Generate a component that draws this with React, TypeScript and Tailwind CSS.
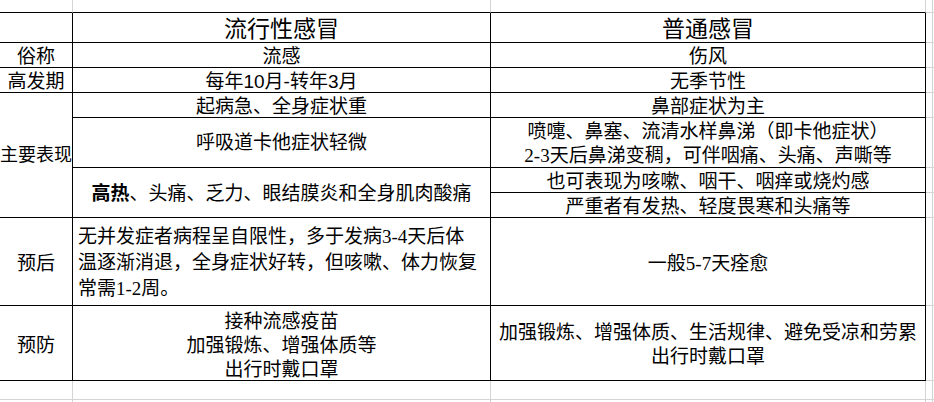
import React from "react";

const FONT = '"Liberation Serif", "Noto Sans CJK SC", serif';
const SANS = '"Liberation Sans", "Noto Sans CJK SC", sans-serif';

const B = "border-r border-b border-black";
const G = "border-r border-b border-[#d4d4d4]";
const C = "flex items-center justify-center text-center";

export default function App() {
  return (
    <div
      className="w-[934px] h-[402px] bg-white text-black overflow-hidden text-[19px] font-normal"
      style={{ fontFamily: FONT }}
    >
      <div className="grid w-[934px] h-[402px] grid-cols-[73px_418px_435px_7px_1fr] grid-rows-[13px_30px_25px_25px_25px_50px_25px_25px_88px_75px_19px_1fr]">
        {/* top strip */}
        <div className="col-start-1 row-start-1 border-r border-[#d4d4d4] border-b-black border-b" />
        <div className="col-start-2 row-start-1 border-r border-[#d4d4d4] border-b-black border-b" />
        <div className="col-start-3 row-start-1 border-r border-[#d4d4d4] border-b-black border-b" />
        <div className={`col-start-4 row-start-1 ${G}`} />
        <div className="col-start-5 row-start-1 border-b border-[#d4d4d4]" />

        {/* header */}
        <div className={`col-start-1 row-start-2 ${B}`} />
        <div className={`col-start-2 row-start-2 ${B} ${C} text-[23px] leading-[30px] pt-[4px]`}>
          流行性感冒
        </div>
        <div className={`col-start-3 row-start-2 ${B} ${C} text-[23px] leading-[30px] pt-[4px]`}>
          普通感冒
        </div>

        {/* 俗称 */}
        <div className={`col-start-1 row-start-3 ${B} ${C} leading-[25px] pt-[2px]`}>俗称</div>
        <div className={`col-start-2 row-start-3 ${B} ${C} leading-[25px] pt-[2px]`}>流感</div>
        <div className={`col-start-3 row-start-3 ${B} ${C} leading-[25px] pt-[2px]`}>伤风</div>

        {/* 高发期 */}
        <div className={`col-start-1 row-start-4 ${B} ${C} leading-[25px] pt-[2px]`}>高发期</div>
        <div
          className={`col-start-2 row-start-4 ${B} ${C} leading-[25px] pt-[2px]`}
          style={{ fontFamily: SANS }}
        >
          每年10月-转年3月
        </div>
        <div className={`col-start-3 row-start-4 ${B} ${C} leading-[25px] pt-[2px]`}>无季节性</div>

        {/* 主要表现 */}
        <div className={`col-start-1 row-start-5 row-span-4 ${B} ${C} text-[18px] leading-[25px] whitespace-nowrap`}>
          主要表现
        </div>
        <div className={`col-start-2 row-start-5 ${B} ${C} leading-[25px] pt-[2px]`}>
          起病急、全身症状重
        </div>
        <div className={`col-start-3 row-start-5 ${B} ${C} leading-[25px] pt-[2px]`}>
          鼻部症状为主
        </div>
        <div className={`col-start-2 row-start-6 ${B} ${C} leading-[25px]`}>呼吸道卡他症状轻微</div>
        <div className={`col-start-3 row-start-6 ${B} ${C} flex-col leading-[24px] pt-[2px]`}>
          <span>喷嚏、鼻塞、流清水样鼻涕（即卡他症状）</span>
          <span>2-3天后鼻涕变稠，可伴咽痛、头痛、声嘶等</span>
        </div>
        <div className={`col-start-2 row-start-7 row-span-2 ${B} ${C} leading-[25px] pt-[2px]`}>
          <span>
            <span className="font-bold">高热</span>、头痛、乏力、眼结膜炎和全身肌肉酸痛
          </span>
        </div>
        <div className={`col-start-3 row-start-7 ${B} ${C} leading-[25px] pt-[2px]`}>
          也可表现为咳嗽、咽干、咽痒或烧灼感
        </div>
        <div className={`col-start-3 row-start-8 ${B} ${C} leading-[25px] pt-[2px]`}>
          严重者有发热、轻度畏寒和头痛等
        </div>

        {/* 预后 */}
        <div className={`col-start-1 row-start-9 ${B} ${C} leading-[25px] pt-[4px]`}>预后</div>
        <div className={`col-start-2 row-start-9 ${B} flex flex-col justify-center pl-[5px] leading-[26px] pt-[3px] whitespace-nowrap`}>
          <span>无并发症者病程呈自限性，多于发病3-4天后体</span>
          <span>温逐渐消退，全身症状好转，但咳嗽、体力恢复</span>
          <span>常需1-2周。</span>
        </div>
        <div className={`col-start-3 row-start-9 ${B} ${C} leading-[25px] pt-[4px]`}>一般5-7天痊愈</div>

        {/* 预防 */}
        <div className={`col-start-1 row-start-10 ${B} ${C} leading-[25px] pt-[4px]`}>预防</div>
        <div className={`col-start-2 row-start-10 ${B} ${C} flex-col leading-[24px] pt-[5px]`}>
          <span>接种流感疫苗</span>
          <span>加强锻炼、增强体质等</span>
          <span>出行时戴口罩</span>
        </div>
        <div className={`col-start-3 row-start-10 ${B} ${C} flex-col leading-[24px] pt-[4px] whitespace-nowrap`}>
          <span>加强锻炼、增强体质、生活规律、避免受凉和劳累</span>
          <span>出行时戴口罩</span>
        </div>

        {/* right gutter */}
        {[2, 3, 4, 5, 6, 7, 8, 9, 10].map((r) => (
          <div
            key={r}
            className="col-start-4 border-r border-b border-[#d4d4d4]"
            style={{ gridRowStart: r }}
          />
        ))}
        {[2, 3, 4, 5, 6, 7, 8, 9, 10].map((r) => (
          <div key={`e${r}`} className="col-start-5 border-b border-[#d4d4d4]" style={{ gridRowStart: r }} />
        ))}

        {/* bottom strip */}
        <div className={`col-start-1 row-start-11 ${G}`} />
        <div className={`col-start-2 row-start-11 ${G}`} />
        <div className={`col-start-3 row-start-11 ${G}`} />
        <div className={`col-start-4 row-start-11 ${G}`} />
        <div className="col-start-5 row-start-11 border-b border-[#d4d4d4]" />
        <div className="col-start-1 row-start-12 border-r border-[#d4d4d4]" />
        <div className="col-start-2 row-start-12 border-r border-[#d4d4d4]" />
        <div className="col-start-3 row-start-12 border-r border-[#d4d4d4]" />
        <div className="col-start-4 row-start-12 border-r border-[#d4d4d4]" />
      </div>
    </div>
  );
}
